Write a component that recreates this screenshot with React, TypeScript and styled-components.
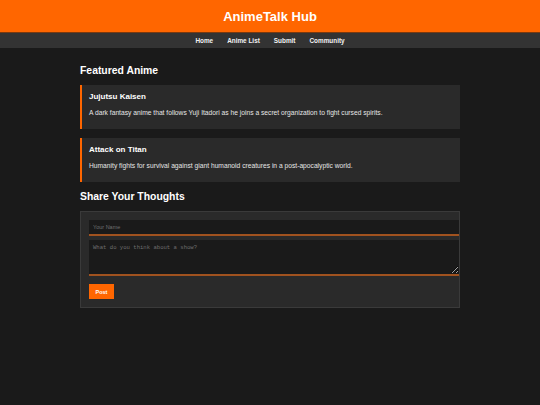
import styled, { createGlobalStyle } from 'styled-components';

const GlobalStyle = createGlobalStyle`
  body {
    margin: 0;
    background-color: #1a1a1a;
    color: #ffffff;
    font-family: 'Liberation Sans', Arial, sans-serif;
  }
`;

const featured = [
  {
    title: 'Jujutsu Kaisen',
    text: 'A dark fantasy anime that follows Yuji Itadori as he joins a secret organization to fight cursed spirits.',
  },
  {
    title: 'Attack on Titan',
    text: 'Humanity fights for survival against giant humanoid creatures in a post-apocalyptic world.',
  },
];

const links = ['Home', 'Anime List', 'Submit', 'Community'];

const App = () => {
  return (
    <>
      <GlobalStyle />
      <Header>
        <Logo>AnimeTalk Hub</Logo>
      </Header>
      <Nav>
        {links.map((l) => (
          <NavLink key={l} href="#">
            {l}
          </NavLink>
        ))}
      </Nav>
      <Main>
        <SectionTitle>Featured Anime</SectionTitle>
        {featured.map((a) => (
          <Card key={a.title}>
            <CardTitle>{a.title}</CardTitle>
            <CardText>{a.text}</CardText>
          </Card>
        ))}
        <SectionTitle>Share Your Thoughts</SectionTitle>
        <Form onSubmit={(e) => e.preventDefault()}>
          <NameInput type="text" placeholder="Your Name" />
          <Comment placeholder="What do you think about a show?" />
          <PostButton type="submit">Post</PostButton>
        </Form>
      </Main>
    </>
  );
};

export default App;

const Header = styled.header`
  height: 32px;
  background-color: #ff6600;
  border-bottom: 1px solid #7a3a10;
  display: flex;
  align-items: center;
  justify-content: center;
`;

const Logo = styled.h1`
  margin: 0;
  font-size: 13px;
  font-weight: bold;
  color: #ffffff;
`;

const Nav = styled.nav`
  height: 15px;
  background-color: #333333;
  display: flex;
  align-items: center;
  justify-content: center;
  gap: 14px;
`;

const NavLink = styled.a`
  color: #f2f2f2;
  text-decoration: none;
  font-size: 6.4px;
  font-weight: bold;
`;

const Main = styled.main`
  width: 380px;
  margin: 0 auto;
  padding-top: 17px;
`;

const SectionTitle = styled.h2`
  margin: 0 0 8px;
  font-size: 10.4px;
  font-weight: bold;
  line-height: 12px;
`;

const Card = styled.div`
  background-color: #2a2a2a;
  border-left: 2px solid #ff6600;
  padding: 7px;
  margin-bottom: 9px;
`;

const CardTitle = styled.h3`
  margin: 0 0 8px;
  font-size: 8px;
  line-height: 9px;
  font-weight: bold;
`;

const CardText = styled.p`
  margin: 0 0 5px;
  font-size: 6.7px;
  line-height: 8px;
  color: #e6e6e6;
`;

const Form = styled.form`
  background-color: #2a2a2a;
  border: 1px solid #3a3a3a;
  padding: 8px;
  display: flex;
  flex-direction: column;
  align-items: flex-start;
`;

const NameInput = styled.input`
  width: 100%;
  height: 6px;
  padding: 4px;
  margin-bottom: 4px;
  background-color: #1a1a1a;
  border: none;
  border-bottom: 2px solid #a0521f;
  color: #ffffff;
  font-family: 'Liberation Sans', Arial, sans-serif;
  font-size: 5.5px;
  outline: none;

  &::placeholder {
    color: #6f6f6f;
  }
`;

const Comment = styled.textarea`
  width: 100%;
  height: 26px;
  padding: 4px;
  margin: 0 0 8px;
  background-color: #1a1a1a;
  border: none;
  border-bottom: 2px solid #a0521f;
  color: #ffffff;
  font-family: 'Liberation Mono', monospace;
  font-size: 5.6px;
  outline: none;

  &::placeholder {
    color: #6f6f6f;
  }
`;

const PostButton = styled.button`
  height: 15px;
  padding: 0 6.5px;
  background-color: #ff6600;
  border: none;
  color: #ffffff;
  font-family: 'Liberation Sans', Arial, sans-serif;
  font-size: 5.5px;
  font-weight: bold;
  cursor: pointer;
`;
